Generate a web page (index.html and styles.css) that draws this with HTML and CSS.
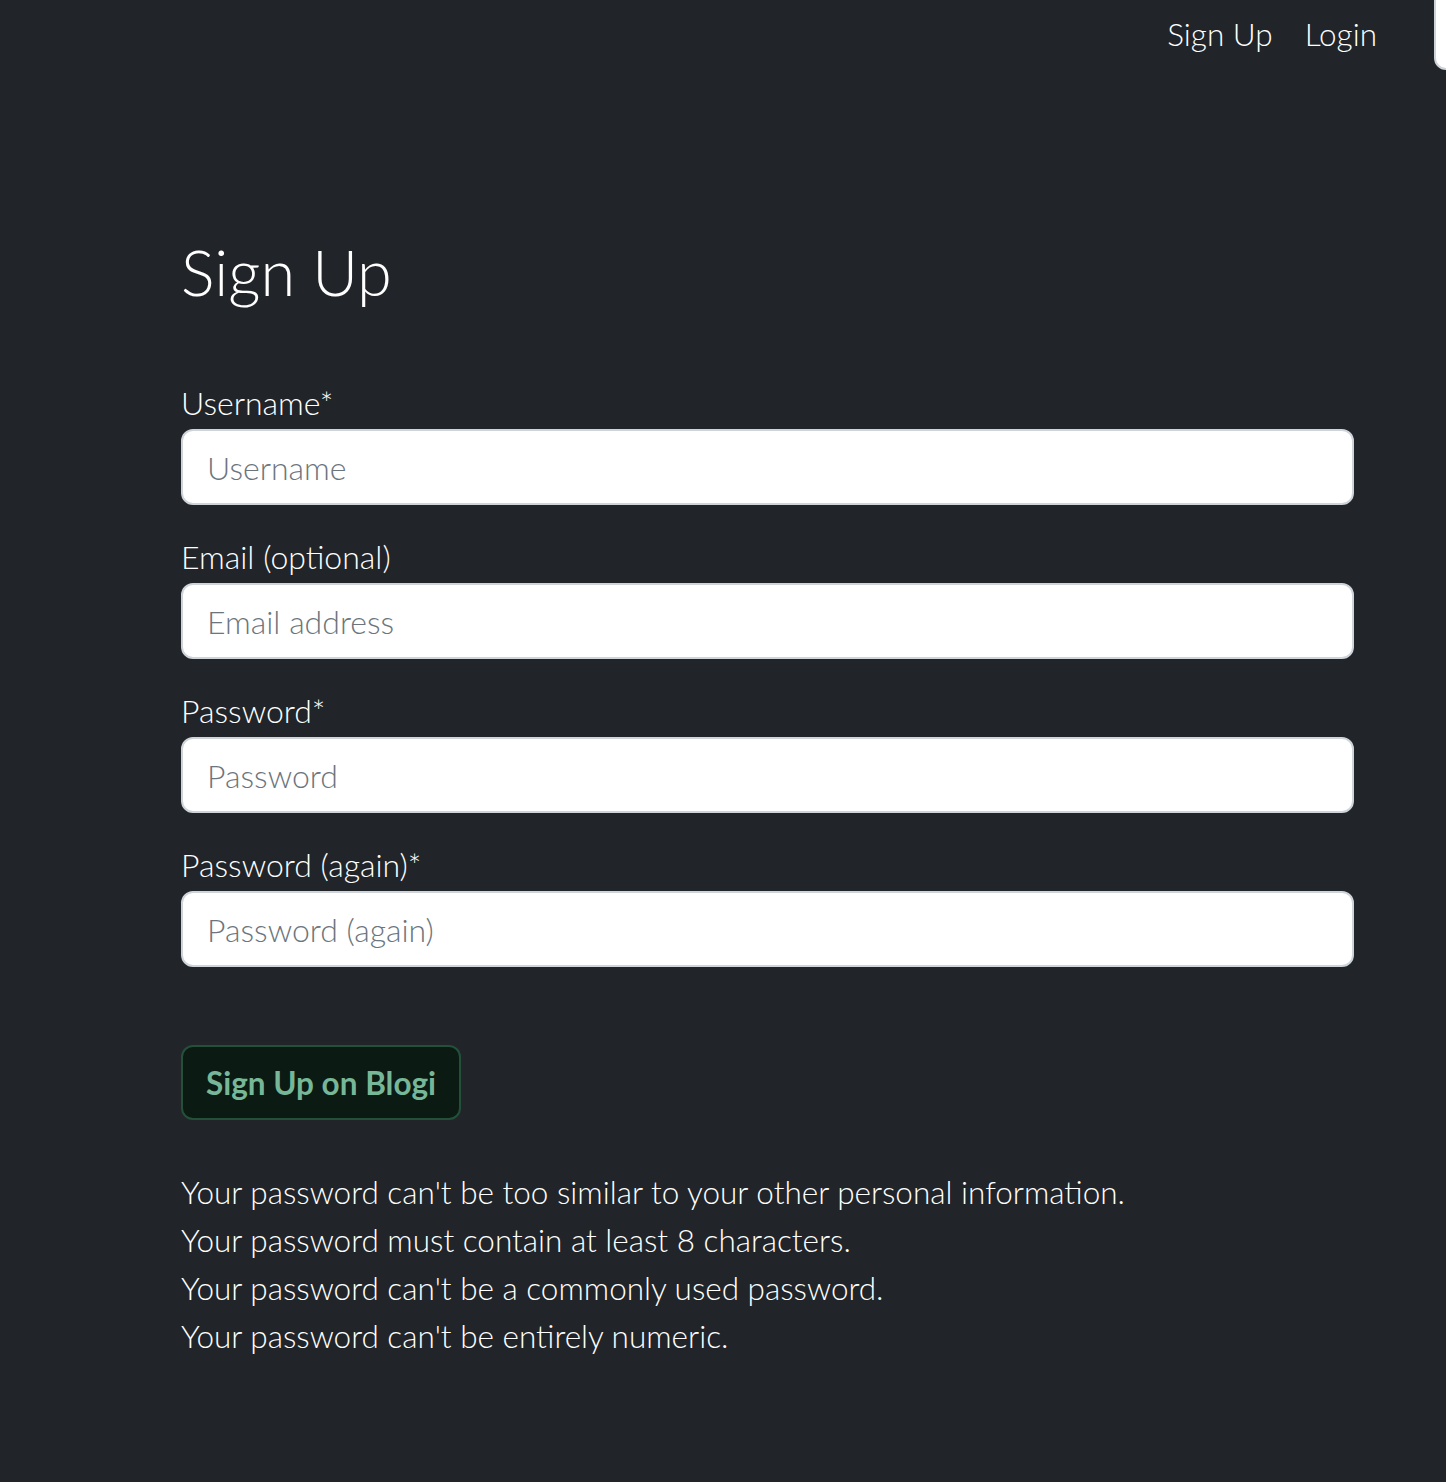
FILE: index.html
```html
<!DOCTYPE html>
<html lang="en">
<head>
<meta charset="utf-8">
<title>Sign Up</title>
<link rel="stylesheet" href="styles.css">
</head>
<body>
<header class="topbar">
  <nav class="nav">
    <a class="nav-link" href="#">Sign Up</a>
    <a class="nav-link" href="#">Login</a>
  </nav>
  <div class="edge-box"></div>
</header>
<main class="container">
  <h1 class="title">Sign Up</h1>
  <form class="signup-form">
    <div class="field">
      <label class="field-label" for="username">Username*</label>
      <input class="field-input" id="username" type="text" placeholder="Username">
    </div>
    <div class="field">
      <label class="field-label" for="email">Email (optional)</label>
      <input class="field-input" id="email" type="email" placeholder="Email address">
    </div>
    <div class="field">
      <label class="field-label" for="password1">Password*</label>
      <input class="field-input" id="password1" type="password" placeholder="Password">
    </div>
    <div class="field">
      <label class="field-label" for="password2">Password (again)*</label>
      <input class="field-input" id="password2" type="password" placeholder="Password (again)">
    </div>
    <button class="submit-btn" type="submit">Sign Up on Blogi</button>
  </form>
  <ul class="help-list">
    <li>Your password can't be too similar to your other personal information.</li>
    <li>Your password must contain at least 8 characters.</li>
    <li>Your password can't be a commonly used password.</li>
    <li>Your password can't be entirely numeric.</li>
  </ul>
</main>
</body>
</html>
```
FILE: styles.css
```css
* { box-sizing: border-box; }
html, body {
  margin: 0;
  padding: 0;
  background: #212529;
}
body {
  font-family: Lato, "Open Sans", sans-serif;
  font-weight: 300;
  font-size: 32px;
  line-height: 48px;
  color: #fff;
  min-height: 1482px;
}
.topbar {
  position: relative;
  height: 96px;
}
.nav {
  display: flex;
  justify-content: flex-end;
  padding: 10px 53px 0 0;
}
.nav-link {
  color: #fff;
  text-decoration: none;
  padding: 0 16px;
  font-size: 31.5px;
}
.edge-box {
  position: absolute;
  top: -2px;
  left: 1434px;
  width: 40px;
  height: 72px;
  background: #fff;
  border: 2px solid #ced4da;
  border-radius: 0 0 0 12px;
}
.container {
  padding: 0 92px 0 181px;
}
.title {
  margin: 136px 0 0;
  font-size: 63px;
  font-weight: 300;
  line-height: 80px;
}
.signup-form {
  margin-top: 67px;
}
.field {
  margin-bottom: 28px;
}
.field-label {
  display: block;
  margin-bottom: 2px;
}
.field-input {
  display: block;
  width: 100%;
  height: 76px;
  padding: 0 24px;
  font-family: inherit;
  font-weight: 300;
  font-size: 32px;
  color: #212529;
  background: #fff;
  border: 2px solid #ced4da;
  border-radius: 12px;
  outline: none;
}
.field-input::placeholder {
  color: #6c757d;
}
.submit-btn {
  display: block;
  margin-top: 78px;
  width: 280px;
  height: 75px;
  padding: 0;
  font-family: inherit;
  font-weight: 700;
  font-size: 31.5px;
  color: #75b798;
  background: #0b1a12;
  border: 2px solid #24503a;
  border-radius: 12px;
}
.help-list {
  list-style: none;
  margin: 48px 0 0;
  padding: 0;
  font-size: 31.5px;
}
```
